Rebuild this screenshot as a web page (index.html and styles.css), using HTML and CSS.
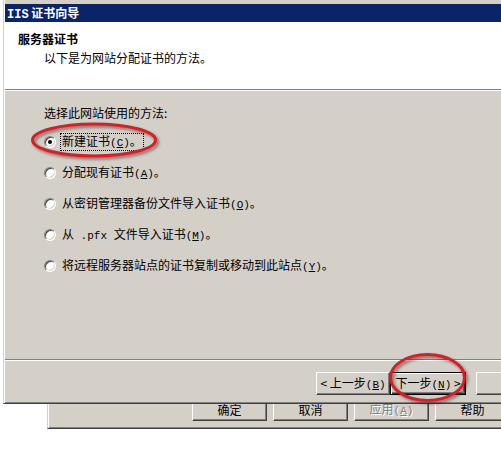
FILE: index.html
```html
<!DOCTYPE html>
<html lang="zh">

<head>
    <meta charset="utf-8">
    <title>IIS 证书向导</title>
    <link rel="stylesheet" href="styles.css">
</head>

<body>
    <div class="wizard">
        <div class="titlebar"><span class="mono">IIS</span> 证书向导</div>

        <div class="head">
            <h1>服务器证书</h1>
            <p>以下是为网站分配证书的方法。</p>
        </div>

        <div class="content">
            <p class="prompt">选择此网站使用的方法:</p>
            <ul class="options">
                <li><span class="radio checked"></span><span class="label focus">新建证书<span class="key">(<u>C</u>)</span>。</span></li>
                <li><span class="radio"></span><span class="label">分配现有证书<span class="key">(<u>A</u>)</span>。</span></li>
                <li><span class="radio"></span><span class="label">从密钥管理器备份文件导入证书<span class="key">(<u>O</u>)</span>。</span></li>
                <li><span class="radio"></span><span class="label">从<span class="key"> .pfx </span>文件导入证书<span class="key">(<u>M</u>)</span>。</span></li>
                <li><span class="radio"></span><span class="label">将远程服务器站点的证书复制或移动到此站点<span class="key">(<u>Y</u>)</span>。</span></li>
            </ul>
        </div>

        <div class="buttons">
            <button class="back">&lt; 上一步<span class="key">(<u>B</u>)</span></button>
            <button class="next default">下一步<span class="key">(<u>N</u>)</span> &gt;</button>
            <button class="cancel">取消</button>
        </div>
    </div>

    <div class="behind">
        <button>确定</button>
        <button>取消</button>
        <button class="disabled">应用<span class="key">(<u>A</u>)</span></button>
        <button>帮助</button>
    </div>

    <svg class="marks" width="501" height="466" viewBox="0 0 501 466">
        <ellipse cx="94" cy="140" rx="61.5" ry="16"></ellipse>
        <ellipse cx="427.5" cy="377.5" rx="37" ry="23"></ellipse>
    </svg>
</body>

</html>
```

FILE: styles.css
```css
* {
    margin: 0;
    padding: 0;
    box-sizing: border-box;
}

body {
    position: relative;
    width: 501px;
    height: 466px;
    overflow: hidden;
    background-color: #fff;
    color: #000;
    font-family: "Noto Sans CJK SC", "Liberation Sans", sans-serif;
    font-size: 12px;
    line-height: 14px;
}

.key,
.mono {
    font-family: "Liberation Mono", monospace;
    font-size: 11px;
}

/* wizard window */
.wizard {
    width: 560px;
    margin-left: 3px;
    padding: 4px 0 0 1px;
    background-color: #d4d0c8;
    border-left: 1px solid #d4d0c8;
    border-bottom: 1px solid #404040;
    box-shadow: inset 1px 0 #fff;
}

.titlebar {
    height: 18px;
    padding-left: 2px;
    background-color: #0a246a;
    color: #fff;
    font-weight: bold;
    line-height: 18px;
}

.titlebar .mono {
    font-size: 12px;
    font-weight: bold;
}

.head {
    height: 68px;
    padding: 10px 0 0 13px;
    background-color: #fff;
    border-bottom: 1px solid #808080;
}

.head h1 {
    font-size: 12px;
    font-weight: bold;
}

.head p {
    margin-top: 5px;
    padding-left: 26px;
}

.content {
    height: 270px;
    padding: 15px 0 0 39px;
    border-top: 1px solid #fff;
    border-bottom: 1px solid #808080;
}

.options {
    list-style: none;
    margin-top: 6px;
}

.options li {
    display: flex;
    align-items: center;
    height: 31px;
}

.radio {
    flex: none;
    width: 12px;
    height: 12px;
    border-radius: 50%;
    background-color: #fff;
    border: 1px solid;
    border-color: #808080 #fff #fff #808080;
    box-shadow: inset 1px 1px #404040, inset -1px -1px #d4d0c8;
}

.radio.checked::after {
    content: "";
    display: block;
    width: 4px;
    height: 4px;
    margin: 3px;
    border-radius: 50%;
    background-color: #000;
}

.label {
    margin-left: 4px;
    padding: 0 1px;
    border: 1px dotted transparent;
    white-space: nowrap;
}

.label.focus {
    border-color: #000;
}

/* buttons */
button {
    flex: none;
    height: 23px;
    font: inherit;
    color: #000;
    background-color: #d4d0c8;
    border: 1px solid;
    border-color: #fff #404040 #404040 #fff;
    box-shadow: inset -1px -1px #808080;
    white-space: nowrap;
}

.buttons {
    display: flex;
    height: 43px;
    padding: 11px 0 0 311px;
    border-top: 1px solid #fff;
    box-shadow: inset 0 -1px #808080;
}

.buttons .back {
    width: 74px;
}

.buttons .next {
    width: 76px;
}

.buttons .default {
    border-color: #000;
    box-shadow: inset 1px 1px #fff, inset -1px -1px #404040, inset -2px -2px #808080;
}

.buttons .cancel {
    width: 75px;
    margin-left: 10px;
}

/* dialog behind the wizard */
.behind {
    display: flex;
    gap: 6px;
    height: 25px;
    margin-left: 47px;
    padding-left: 144px;
    overflow: hidden;
    background-color: #d4d0c8;
    border-left: 1px solid #d4d0c8;
    border-bottom: 1px solid #404040;
    box-shadow: inset 1px 0 #fff, inset 0 -1px #808080;
}

.behind button {
    width: 75px;
    margin-top: -6px;
}

.behind .disabled {
    color: #808080;
    text-shadow: 1px 1px #fff;
}

/* red marks drawn over the screenshot */
.marks {
    position: absolute;
    left: 0;
    top: 0;
    pointer-events: none;
}

.marks ellipse {
    fill: none;
    stroke: #e01b24;
    stroke-width: 3;
    filter: drop-shadow(2px 2px 1.5px rgba(0, 0, 0, 0.45));
}
```
